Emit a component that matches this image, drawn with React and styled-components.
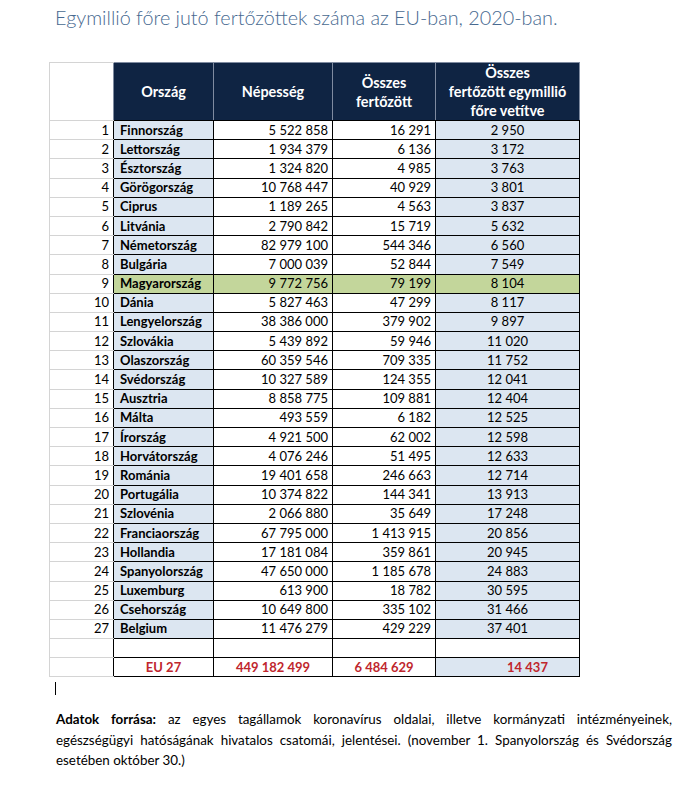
import React from "react";
import styled, { createGlobalStyle } from "styled-components";

const Global = createGlobalStyle`
  html, body { margin: 0; padding: 0; background: #fff; }
  body { font-family: Lato, "Open Sans", sans-serif; color: #000; }
`;

const Page = styled.div`
  width: 684px;
  height: 786px;
  padding: 5px 0 0 49px;
  box-sizing: border-box;
`;

const Title = styled.h1`
  margin: 0 0 0 6px;
  font-family: Lato, sans-serif;
  font-weight: 300;
  font-size: 19.8px;
  line-height: 24px;
  color: #476990;
`;

const Table = styled.table`
  margin: 33px 0 0 0;
  border-collapse: collapse;
  table-layout: fixed;
  width: 530px;
  font-family: Lato, sans-serif;
  font-size: 13px;
`;

const HeadCell = styled.th`
  background: #0f2443;
  color: #fff;
  font-weight: 700;
  font-size: 14.4px;
  line-height: 19px;
  height: 56px;
  padding: 0 2px;
  text-align: center;
  vertical-align: middle;
  border: 1px solid #7f8ba0;
  border-bottom-color: #000;
`;

const NumHead = styled.th`
  border: 1px solid #d4d4d4;
  border-right: none;
  background: #fff;
`;

const Row = styled.tr`
  height: 19.2px;
`;

const Rank = styled.td`
  border: 1px solid #d4d4d4;
  border-right: none;
  text-align: right;
  padding: 0 4px 0 0;
  background: #fff;
  line-height: 17px;
`;

const Cell = styled.td`
  border: 1px solid #000;
  padding: 0 4px 0 ${p => p.$pl ?? (p.$align === "left" ? 6 : 4)}px;
  text-align: ${p => p.$align || "right"};
  background: ${p => (p.$hl ? "#c3d69b" : p.$blue ? "#dce6f1" : "#fff")};
  font-weight: ${p => (p.$bold ? 700 : 400)};
  color: ${p => (p.$red ? "#c0262d" : "#000")};
  line-height: 17px;
  white-space: nowrap;
  overflow: hidden;
`;

const Cursor = styled.div`
  margin: 5px 0 0 6px;
  width: 1px;
  height: 13px;
  background: #000;
`;

const Note = styled.div`
  margin: 14px 0 0 7px;
  width: 616px;
  font-family: Lato, sans-serif;
  font-size: 13.4px;
  line-height: 20.5px;
`;

const NoteLine = styled.div`
  text-align: ${p => (p.$last ? "left" : "justify")};
  text-align-last: ${p => (p.$last ? "left" : "justify")};
  white-space: nowrap;
`;

const data = [
  ["Finnország", "5 522 858", "16 291", "2 950"],
  ["Lettország", "1 934 379", "6 136", "3 172"],
  ["Észtország", "1 324 820", "4 985", "3 763"],
  ["Görögország", "10 768 447", "40 929", "3 801"],
  ["Ciprus", "1 189 265", "4 563", "3 837"],
  ["Litvánia", "2 790 842", "15 719", "5 632"],
  ["Németország", "82 979 100", "544 346", "6 560"],
  ["Bulgária", "7 000 039", "52 844", "7 549"],
  ["Magyarország", "9 772 756", "79 199", "8 104"],
  ["Dánia", "5 827 463", "47 299", "8 117"],
  ["Lengyelország", "38 386 000", "379 902", "9 897"],
  ["Szlovákia", "5 439 892", "59 946", "11 020"],
  ["Olaszország", "60 359 546", "709 335", "11 752"],
  ["Svédország", "10 327 589", "124 355", "12 041"],
  ["Ausztria", "8 858 775", "109 881", "12 404"],
  ["Málta", "493 559", "6 182", "12 525"],
  ["Írország", "4 921 500", "62 002", "12 598"],
  ["Horvátország", "4 076 246", "51 495", "12 633"],
  ["Románia", "19 401 658", "246 663", "12 714"],
  ["Portugália", "10 374 822", "144 341", "13 913"],
  ["Szlovénia", "2 066 880", "35 649", "17 248"],
  ["Franciaország", "67 795 000", "1 413 915", "20 856"],
  ["Hollandia", "17 181 084", "359 861", "20 945"],
  ["Spanyolország", "47 650 000", "1 185 678", "24 883"],
  ["Luxemburg", "613 900", "18 782", "30 595"],
  ["Csehország", "10 649 800", "335 102", "31 466"],
  ["Belgium", "11 476 279", "429 229", "37 401"],
];

export default function App() {
  return (
    <>
      <Global />
      <Page>
        <Title>Egymillió főre jutó fertőzöttek száma az EU-ban, 2020-ban.</Title>
        <Table>
          <colgroup>
            <col style={{ width: 64 }} />
            <col style={{ width: 100 }} />
            <col style={{ width: 119 }} />
            <col style={{ width: 103 }} />
            <col style={{ width: 144 }} />
          </colgroup>
          <thead>
            <tr>
              <NumHead />
              <HeadCell>Ország</HeadCell>
              <HeadCell>Népesség</HeadCell>
              <HeadCell>Összes<br />fertőzött</HeadCell>
              <HeadCell>Összes<br />fertőzött egymillió<br />főre vetítve</HeadCell>
            </tr>
          </thead>
          <tbody>
            {data.map((r, i) => {
              const hl = r[0] === "Magyarország";
              return (
                <Row key={r[0]}>
                  <Rank>{i + 1}</Rank>
                  <Cell $align="left" $bold $blue $hl={hl}>{r[0]}</Cell>
                  <Cell $hl={hl}>{r[1]}</Cell>
                  <Cell $hl={hl}>{r[2]}</Cell>
                  <Cell $align="center" $blue $hl={hl}>{r[3]}</Cell>
                </Row>
              );
            })}
            <Row>
              <Rank />
              <Cell />
              <Cell />
              <Cell />
              <Cell />
            </Row>
            <Row>
              <Rank />
              <Cell $align="center" $bold $red>EU 27</Cell>
              <Cell $align="center" $bold $red>449 182 499</Cell>
              <Cell $align="center" $bold $red>6 484 629</Cell>
              <Cell $align="center" $bold $red $blue $pl={44}>14 437</Cell>
            </Row>
          </tbody>
        </Table>
        <Cursor />
        <Note>
          <NoteLine><b>Adatok forrása:</b> az egyes tagállamok koronavírus oldalai, illetve kormányzati intézményeinek,</NoteLine>
          <NoteLine>egészségügyi hatóságának hivatalos csatomái, jelentései. (november 1. Spanyolország és Svédország</NoteLine>
          <NoteLine $last>esetében október 30.)</NoteLine>
        </Note>
      </Page>
    </>
  );
}
